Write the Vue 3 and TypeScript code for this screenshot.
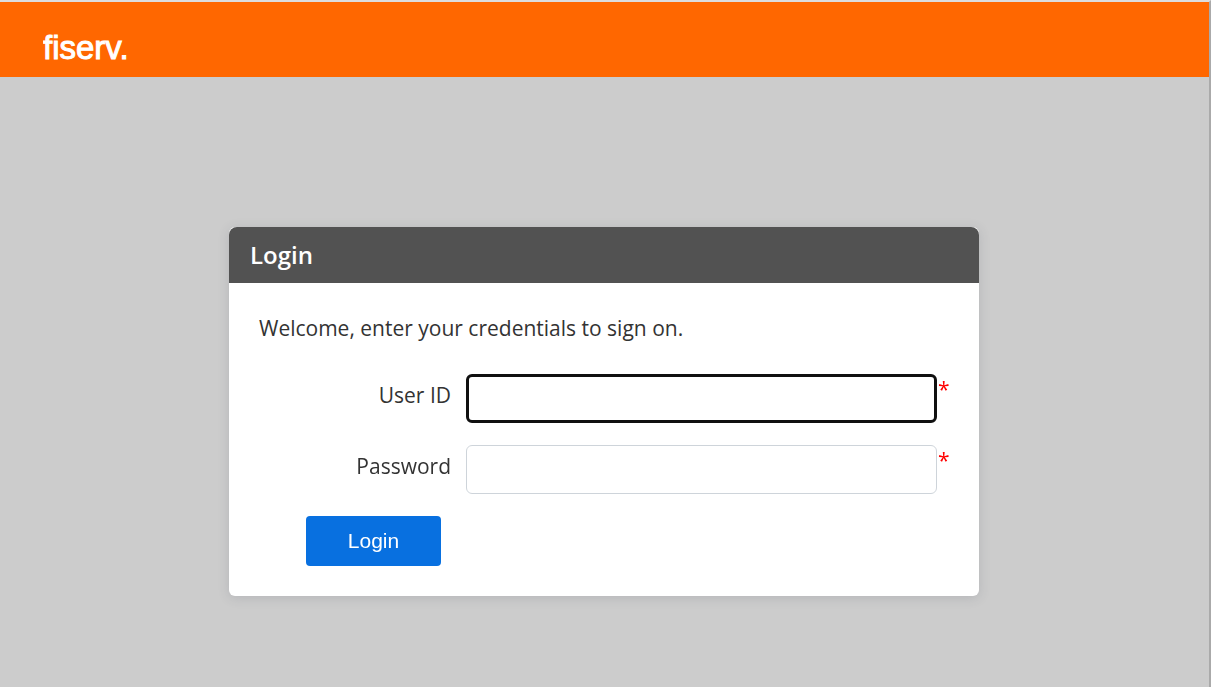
<script setup lang="ts">
import { onMounted, ref } from 'vue'

const userId = ref('')
const password = ref('')
const userInput = ref<HTMLInputElement | null>(null)

onMounted(() => userInput.value?.focus())
</script>

<template>
  <div class="page">
    <header class="bar">
      <svg class="logo" width="110" height="50" role="img" aria-label="fiserv.">
        <text x="0" y="44">fiserv.</text>
      </svg>
    </header>
    <main class="content">
      <section class="card">
        <h1 class="title">Login</h1>
        <form class="body" @submit.prevent>
          <p class="welcome">Welcome, enter your credentials to sign on.</p>
          <div class="row">
            <label for="user">User ID</label>
            <input id="user" ref="userInput" v-model="userId" class="active" type="text" autocomplete="off" />
            <span class="required">*</span>
          </div>
          <div class="row">
            <label for="pass">Password</label>
            <input id="pass" v-model="password" type="password" autocomplete="off" />
            <span class="required">*</span>
          </div>
          <button class="submit" type="submit">Login</button>
        </form>
      </section>
    </main>
  </div>
</template>

<style>
body {
  background: #cccccc;
}
</style>

<style scoped>
.page {
  box-sizing: border-box;
  min-height: 100vh;
  border-top: 2px solid #dddddd;
  border-right: 2px solid #aaaaaa;
  background: #cccccc;
  font-family: "Open Sans", "Noto Sans", sans-serif;
  color: #333333;
}
.bar {
  display: flex;
  align-items: center;
  height: 75px;
  padding: 0 43px;
  background: #ff6700;
}
.logo {
  display: block;
}
.logo text {
  font-family: "Liberation Sans", sans-serif;
  font-size: 33px;
  fill: #ffffff;
  stroke: #ffffff;
  stroke-width: 1px;
}
.content {
  padding: 150px 21px 40px 20px;
}
.card {
  max-width: 750px;
  margin: 0 auto;
  border-radius: 6px;
  background: #ffffff;
  box-shadow: 0 2px 12px rgba(60, 70, 90, 0.16);
}
.title {
  margin: 0;
  padding: 0 21px;
  border-radius: 8px 8px 0 0;
  background: #525252;
  color: #ffffff;
  font-size: 24px;
  font-weight: 600;
  line-height: 56px;
}
.body {
  padding: 30px;
}
.welcome {
  margin: 0 0 30px;
  font-size: 21px;
  line-height: 31px;
}
.row {
  display: flex;
  align-items: flex-start;
  margin-bottom: 22px;
}
label {
  width: 192px;
  margin-right: 15px;
  font-size: 21px;
  line-height: 42px;
  text-align: right;
}
input {
  box-sizing: border-box;
  flex: 1;
  min-width: 0;
  height: 49px;
  padding: 0 12px;
  border: 1px solid #ced4da;
  border-radius: 6px;
  outline: none;
  background: #ffffff;
  font: inherit;
  font-size: 21px;
}
input.active {
  border: 3px solid #101010;
}
.required {
  width: 11px;
  padding-left: 1px;
  color: #ff0000;
  font-size: 21px;
  line-height: 30px;
}
.submit {
  display: block;
  width: 135px;
  height: 50px;
  margin-left: 47px;
  padding: 0;
  border: 0;
  border-radius: 4px;
  background: #0870e0;
  color: #ffffff;
  font-family: "Liberation Sans", sans-serif;
  font-size: 21px;
}
</style>
